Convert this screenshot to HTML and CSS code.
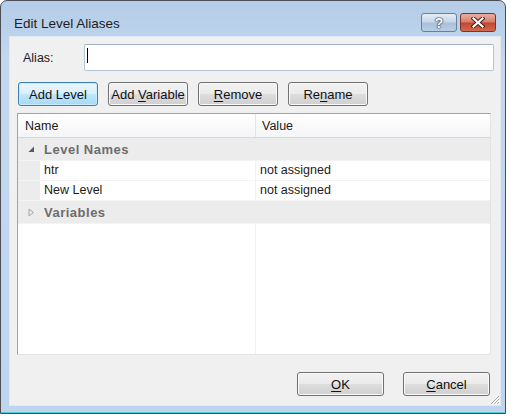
FILE: index.html
```html
<!DOCTYPE html>
<html lang="en">
<head>
  <meta charset="UTF-8">
  <title>Edit Level Aliases</title>
  <link rel="stylesheet" href="styles.css">
</head>
<body>
<div class="window">
  <div class="titlebar">
    <span class="title">Edit Level Aliases</span>
    <div class="caption-buttons">
      <span class="cap help">?</span>
      <span class="cap close">
        <svg width="14" height="11" viewBox="0 0 14 11">
          <path d="M2.5 1.5 L11.5 9.5 M11.5 1.5 L2.5 9.5" stroke="#3b1a14" stroke-width="4" stroke-linecap="square"/>
          <path d="M2.5 1.5 L11.5 9.5 M11.5 1.5 L2.5 9.5" stroke="#fff" stroke-width="2.2" stroke-linecap="square"/>
        </svg>
      </span>
    </div>
  </div>

  <div class="client">
    <div class="alias-row">
      <label class="alias-label">Alias:</label>
      <div class="textbox"><span class="caret"></span></div>
    </div>

    <div class="toolbar">
      <button class="btn default">Add Level</button>
      <button class="btn">Add <u>V</u>ariable</button>
      <button class="btn"><u>R</u>emove</button>
      <button class="btn">Re<u>n</u>ame</button>
    </div>

    <div class="grid">
      <div class="grid-head">
        <div class="cell name-col">Name</div>
        <div class="cell value-col">Value</div>
      </div>
      <div class="row group">
        <span class="arrow">
          <svg width="7" height="7" viewBox="0 0 7 7"><path d="M6 0.5 L6 6 L0.5 6 Z" fill="#5a5a5a"/></svg>
        </span>
        <span class="group-name">Level Names</span>
      </div>
      <div class="row item">
        <div class="cell name-col">htr</div>
        <div class="cell value-col">not assigned</div>
      </div>
      <div class="row item">
        <div class="cell name-col">New Level</div>
        <div class="cell value-col">not assigned</div>
      </div>
      <div class="row group">
        <span class="arrow">
          <svg width="7" height="9" viewBox="0 0 7 9"><path d="M1 1 L5.5 4.5 L1 8 Z" fill="none" stroke="#a6a6a6" stroke-width="1"/></svg>
        </span>
        <span class="group-name">Variables</span>
      </div>
      <div class="grid-fill">
        <div class="fill-name"></div>
        <div class="fill-value"></div>
      </div>
    </div>

    <div class="footer">
      <button class="btn wide"><u>O</u>K</button>
      <button class="btn wide"><u>C</u>ancel</button>
    </div>

    <svg class="grip" width="12" height="12" viewBox="0 0 12 12">
      <path d="M11 3 L3 11 M11 6 L6 11 M11 9 L9 11" stroke="#a9a9a9" stroke-width="1"/>
      <path d="M12 4 L4 12 M12 7 L7 12 M12 10 L10 12" stroke="#fff" stroke-width="1"/>
    </svg>
  </div>
</div>
</body>
</html>
```

FILE: styles.css
```css
/* Reset */
* {
  margin: 0;
  padding: 0;
  box-sizing: border-box;
}

body {
  font-family: 'Liberation Sans', Arial, sans-serif;
  font-size: 12.5px;
  color: #1b1b1b;
  background: #fff;
}

/* Window frame */
.window {
  width: 506px;
  height: 414px;
  border: 1px solid #4b4f55;
  border-radius: 7px 7px 0 0;
  background: linear-gradient(#b4cce7, #c3d8ef 60px, #bfd5ee);
  padding: 0 4px 7px 8px;
  display: flex;
  flex-direction: column;
  box-shadow: inset 0 -1px 0 #57c4d8;
}

.titlebar {
  height: 35px;
  display: flex;
  align-items: flex-start;
  justify-content: space-between;
}

.title {
  font-size: 13.5px;
  color: #1e1e1e;
  margin: 15px 0 0 5px;
}

.caption-buttons {
  display: flex;
  gap: 3px;
  margin: 12px 5px 0 0;
}

.cap {
  height: 19px;
  border-radius: 3px;
  display: flex;
  align-items: center;
  justify-content: center;
}

.help {
  width: 36px;
  border: 1px solid #6c7f99;
  background: linear-gradient(#e3ecf6, #c6d6ea 48%, #a9c0dc 52%, #b7cde6);
  color: #fff;
  font-weight: bold;
  font-size: 14px;
  text-shadow: 0 0 1px #2a3a50, 0 0 1px #2a3a50, 0 0 2px #2a3a50;
}

.close {
  width: 36px;
  border: 1px solid #7e3326;
  background: linear-gradient(#eab0a2, #d77c68 48%, #c2472f 52%, #d06a4f);
}

/* Client area */
.client {
  flex: 1;
  background: #f0f0f0;
  border: 1px solid #dfe8f3;
  position: relative;
  display: flex;
  flex-direction: column;
}

.alias-row {
  display: flex;
  align-items: center;
  margin-top: 7px;
  height: 27px;
}

.alias-label {
  width: 60px;
  margin-left: 13px;
}

.textbox {
  width: 410px;
  height: 27px;
  margin-left: 1px;
  background: #fff;
  border: 1px solid #b5c4d6;
  border-top-color: #a0b2c8;
  border-radius: 2px;
  padding: 3px 1px;
}

.caret {
  display: block;
  width: 1px;
  height: 15px;
  margin-left: 1px;
  background: #000;
}

.toolbar {
  display: flex;
  gap: 10px;
  margin: 11px 0 0 8px;
}

.btn {
  font-family: inherit;
  font-size: 13px;
  color: #111;
  width: 80px;
  height: 24px;
  border: 1px solid #707070;
  border-radius: 3px;
  background: linear-gradient(#f2f2f2, #ebebeb 48%, #dddddd 52%, #cfcfcf);
  box-shadow: inset 0 0 0 1px #fbfbfb;
}

.btn.default {
  border-color: #3c7fb1;
  background: linear-gradient(#eaf6fd, #d9f0fc 48%, #bee6fd 52%, #a7d9f5);
  box-shadow: inset 0 0 0 1px #c6ecfe;
}

.btn u {
  text-underline-offset: 2px;
}

/* Property grid */
.grid {
  margin: 7px 0 0 7px;
  width: 474px;
  height: 242px;
  background: #fff;
  border: 1px solid;
  border-color: #a3a3a3 #e3e3e3 #e3e3e3 #a3a3a3;
  display: flex;
  flex-direction: column;
  overflow: hidden;
}

.grid-head {
  display: flex;
  height: 24px;
  background: linear-gradient(#fff, #f4f5f7);
  border-bottom: 1px solid #d7d7d7;
}

.grid-head .cell {
  padding: 5px 0 0 7px;
}

.grid-head .name-col {
  border-right: 1px solid #e4e4e4;
}

.grid-head .value-col {
  padding-left: 6px;
}

.name-col {
  width: 238px;
}

.value-col {
  flex: 1;
}

.row {
  display: flex;
  align-items: center;
  border-bottom: 1px solid #f3f3f3;
}

.row.group {
  height: 23px;
  background: #ececec;
}

.row.item {
  height: 20px;
  background: #ececec;
  padding-left: 22px;
}

.row.item .cell {
  background: #fff;
  height: 100%;
  padding: 2px 0 0 4px;
}

.row.item .name-col {
  width: 216px;
  border-right: 1px solid #f0f0f0;
}

.arrow {
  width: 26px;
  display: flex;
  justify-content: center;
  padding-left: 1px;
}

.group-name {
  font-weight: bold;
  font-size: 13px;
  letter-spacing: 0.5px;
  color: #6d6d6d;
}

.grid-fill {
  flex: 1;
  display: flex;
}

.fill-name {
  width: 238px;
  border-right: 1px solid #f0f0f0;
}

/* Dialog buttons */
.footer {
  display: flex;
  justify-content: flex-end;
  gap: 19px;
  margin: 17px 10px 0 0;
}

.btn.wide {
  width: 87px;
  height: 24px;
}

.grip {
  position: absolute;
  right: 0;
  bottom: 0;
}
```
